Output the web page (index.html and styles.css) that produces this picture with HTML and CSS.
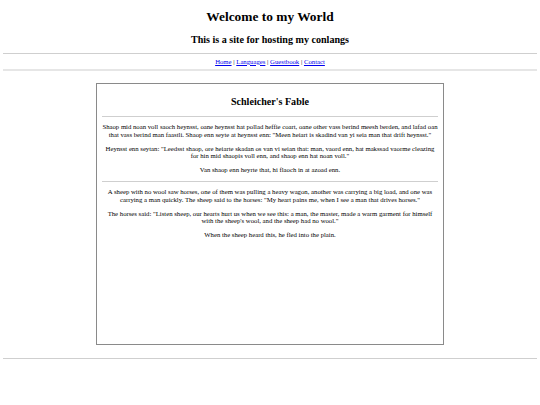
FILE: index.html
```html
<!DOCTYPE html>
<html>
<head>
<meta charset="utf-8">
<title>Welcome to my World</title>
<link rel="stylesheet" href="styles.css">
</head>
<body class="page">
<header class="site-header">
<h1 class="site-title">Welcome to my World</h1>
<h2 class="site-subtitle">This is a site for hosting my conlangs</h2>
</header>
<hr class="rule">
<nav class="nav"><a href="#">Home</a> | <a href="#">Languages</a> | <a href="#">Guestbook</a> | <a href="#">Contact</a></nav>
<hr class="rule rule-soft">
<main class="box">
<h2 class="box-title">Schleicher's Fable</h2>
<hr class="rule">
<p class="text">Shaop mid noan voll saoch heynsst, oane heynsst hat pollad heffie coart, oane other vass berind meesh berden, and lafad oan that vass berind man faastli. Shaop enn seyte at heynsst enn: "Meen heiart is skadind van yi seia man that drift heynsst."</p>
<p class="text">Heynsst enn seytan: "Leedsst shaop, ore heiarte skadan os van vi seian that: man, vaord enn, hat makssad vaorme cleazing for hin mid shaopis voll enn, and shaop enn hat noan voll."</p>
<p class="text">Van shaop enn heyrte that, hi flaoch in at azoad enn.</p>
<hr class="rule">
<p class="text">A sheep with no wool saw horses, one of them was pulling a heavy wagon, another was carrying a big load, and one was carrying a man quickly. The sheep said to the horses: "My heart pains me, when I see a man that drives horses."</p>
<p class="text">The horses said: "Listen sheep, our hearts hurt us when we see this: a man, the master, made a warm garment for himself with the sheep's wool, and the sheep had no wool."</p>
<p class="text">When the sheep heard this, he fled into the plain.</p>
</main>
<hr class="rule">
</body>
</html>
```
FILE: styles.css
```css
html, body {
  margin: 0;
  padding: 0;
}
.page {
  padding: 0 3.4px;
  font-family: "Liberation Serif", "Times New Roman", serif;
  font-size: 6.72px;
  color: #000;
  background: #fff;
  text-align: center;
}
.site-header {
  padding-top: 0.1px;
}
.site-title {
  font-size: 13.4px;
  font-weight: bold;
  margin: 9.2px 0 8.8px;
}
.site-subtitle {
  font-size: 10.08px;
  font-weight: bold;
  margin: 0 0 8.4px;
}
.rule {
  height: 0;
  border: 0;
  border-top: 1px solid #cfcfcf;
  margin: 3.4px 0;
}
.rule-soft {
  border-top: 2px solid #e6e6e6;
  margin-bottom: 0;
}
.nav {
  line-height: 7.7px;
}
.nav a {
  color: #0000ee;
}
.box {
  display: block;
  box-sizing: border-box;
  width: 348px;
  height: 262px;
  margin: 12px auto 12.6px;
  padding: 4.2px 5px;
  border: 1px solid #8a8a8a;
}
.box-title {
  font-size: 10.08px;
  font-weight: bold;
  margin: 8px 0 8.4px;
}
.text {
  margin: 6.5px 0;
  line-height: 7.6px;
}
```
